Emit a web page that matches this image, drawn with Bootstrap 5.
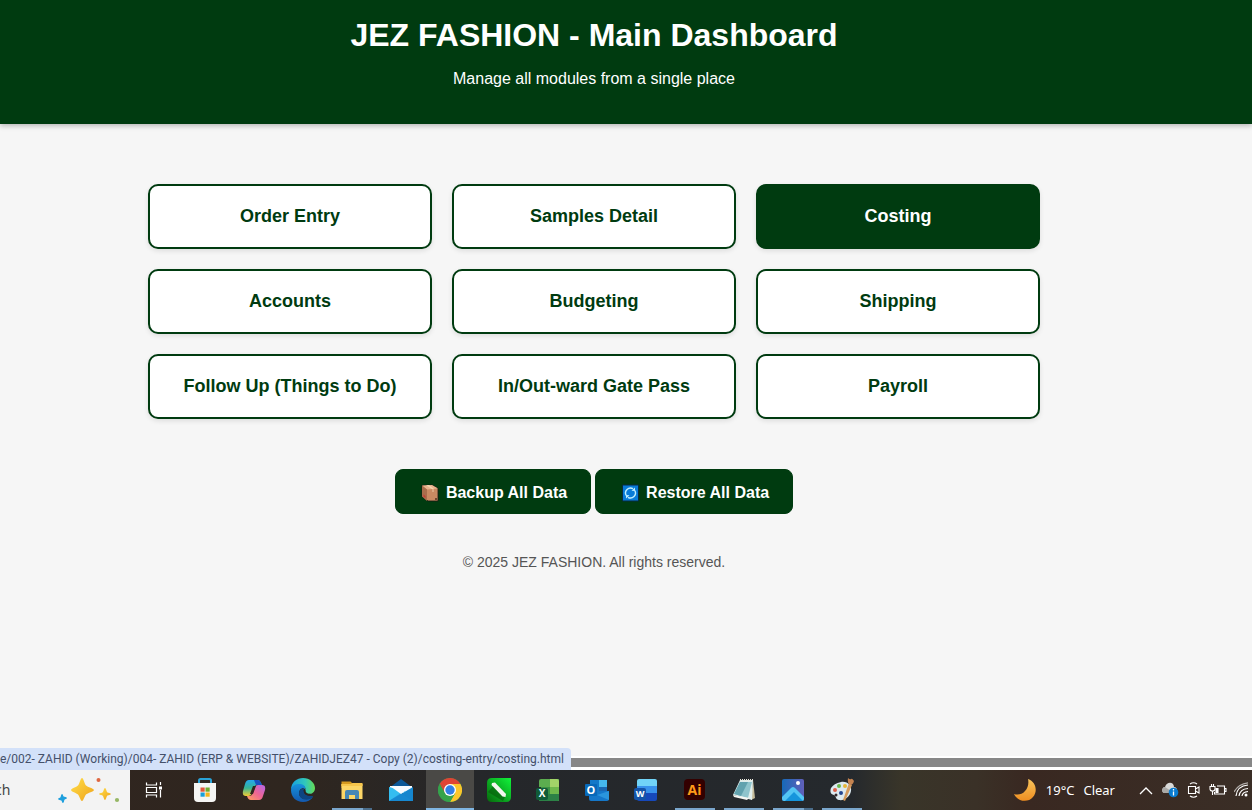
<!DOCTYPE html>
<html lang="en">
<head>
<meta charset="utf-8">
<meta name="viewport" content="width=device-width, initial-scale=1">
<title>JEZ FASHION - Main Dashboard</title>
<link href="https://cdn.jsdelivr.net/npm/bootstrap@5.3.0/dist/css/bootstrap.min.css" rel="stylesheet">
<style>
  :root { --brand: #003b10; }
  body { font-family: "Liberation Sans", Arial, sans-serif; background: #fff; color: #333; overflow: hidden; }
  .page-view { background: #f6f6f6; }
  .page-head { background: var(--brand); color: #fff; height: 124px; padding: 16px 64px 0 0; box-shadow: 0 2px 5px rgba(0,0,0,.25); }
  .page-head h1 { font-size: 32px; line-height: 38px; font-weight: 700; margin-bottom: 15px; }
  .page-head p { font-size: 16px; line-height: 20px; }
  .page-main { padding: 60px 64px 0 0; }
  .module-grid { display: grid; grid-template-columns: repeat(3, 1fr); gap: 20px; max-width: 892px; margin: 0 auto 50px; }
  .module-btn { --bs-btn-color: var(--brand); --bs-btn-bg: #fff; --bs-btn-border-color: var(--brand);
    --bs-btn-hover-bg: var(--brand); --bs-btn-hover-color: #fff; --bs-btn-hover-border-color: var(--brand);
    --bs-btn-active-bg: var(--brand); --bs-btn-active-color: #fff; --bs-btn-active-border-color: var(--brand);
    height: 65px; padding: 4px 12px 6px; border-width: 2px; border-radius: 10px; font-size: 18px; font-weight: 700; line-height: 24px;
    display: flex; align-items: center; justify-content: center; box-shadow: 0 2px 5px rgba(0,0,0,.1); }
  .data-btn { --bs-btn-color: #fff; --bs-btn-bg: var(--brand); --bs-btn-border-color: var(--brand);
    --bs-btn-hover-bg: #00511a; --bs-btn-hover-color: #fff; height: 45px; padding: 2px 23px 0 25px; border-radius: 8px;
    font-size: 16px; font-weight: 700; display: flex; align-items: center; gap: 6px; }
  .page-foot { font-size: 14px; line-height: 20px; color: #555; margin-top: 38px; }
  .link-status { left: 0; bottom: -3px; height: 22px; background: #d3e1f9; color: #44506a; border-radius: 0 4px 0 0;
    font-family: Roboto, "Noto Sans", sans-serif; font-size: 12px; line-height: 23px; padding-right: 7px; white-space: nowrap; }
  .frame-edge { height: 14px; background: #878787; border-top: 2px solid #fff; border-bottom: 3px solid #fff; }
  .taskbar { height: 40px; margin-bottom: 2px; color: #fff; gap: 1px; overflow: hidden;
    background: linear-gradient(90deg, #30251f 0, #2f261f 24%, #25272a 38%, #25292d 68%, #393529 72%, #3a3127 78%, #392821 82%, #3a2e26 100%); }
  .search-box { width: 130px; background: #f3f3f3; }
  .search-box input { width: 56px; border: 0; background: none; padding: 0; font: 14px/20px "Noto Sans", sans-serif; color: #444; text-indent: -34px; }
  .task-item { width: 48px; height: 40px; border: 0; padding: 0; background: none; color: #fff; display: flex; align-items: center; justify-content: center; flex: none; }
  .task-view { width: 46px; margin-right: 3px; }
  .is-open { background: linear-gradient(#7aa6cc, #7aa6cc) center bottom / 40px 2px no-repeat; }
  .is-many { background: linear-gradient(90deg, #7aa6cc 31px, #4b6d8b 31px) center bottom / 40px 2px no-repeat; }
  .is-active { background: #4a4946; box-shadow: inset 0 -2px #80b6e2; }
  .weather { font: 13px/20px "Noto Sans", sans-serif; border: 0; background: none; color: #fff; padding: 0; gap: 9px; margin-right: 19px; }
  .tray-group { margin-right: -2px; }
  .tray-item { width: 24px; height: 40px; border: 0; padding: 0; background: none; color: #fff; display: flex; align-items: center; justify-content: center; flex: none; }
  .icon-word { font-family: "Open Sans", sans-serif; font-weight: 700; }
</style>
</head>
<body>
<div class="min-vh-100 d-flex flex-column">
  <div class="page-view flex-grow-1">
    <header class="page-head text-center position-relative">
      <h1>JEZ FASHION - Main Dashboard</h1>
      <p class="mb-0">Manage all modules from a single place</p>
    </header>
    <main class="page-main text-center">
      <nav class="module-grid" aria-label="Modules">
        <a class="btn module-btn" href="#order">Order Entry</a>
        <a class="btn module-btn" href="#samples">Samples Detail</a>
        <a class="btn module-btn active" href="#costing">Costing</a>
        <a class="btn module-btn" href="#accounts">Accounts</a>
        <a class="btn module-btn" href="#budgeting">Budgeting</a>
        <a class="btn module-btn" href="#shipping">Shipping</a>
        <a class="btn module-btn" href="#followup">Follow Up (Things to Do)</a>
        <a class="btn module-btn" href="#gatepass">In/Out-ward Gate Pass</a>
        <a class="btn module-btn" href="#payroll">Payroll</a>
      </nav>
      <div class="d-flex justify-content-center gap-1">
        <button type="button" class="btn data-btn">
          <svg width="19" height="18" viewBox="0 0 19 18" aria-hidden="true"><path d="M1 1.500 11 1l6 3.500V17H7L1 12.500z" fill="#c98a62" stroke="#1b1712" stroke-width=".8"/><path d="M1 1.500 11 1l6 3.500-11 1z" fill="#e7b58e"/><path d="M1 1.500 6 5.500V17l-5-4.500z" fill="#a96d4b"/><path d="M5 1.300 11 5l2 0L8 1.100z" fill="#f3d3ae"/><path d="M11 5h2v3h-2z" fill="#dba982"/><path d="M2.500 10.500 4.500 12v2l-2-1.500z" fill="#c33c35"/><path d="M14 14h2v2h-2z" fill="#70452f"/></svg>
          Backup All Data</button>
        <button type="button" class="btn data-btn">
          <svg width="19" height="18" viewBox="0 0 19 18" aria-hidden="true"><path d="M1.500 1h16v16h-16z" fill="#087bd8" stroke="#062b42"/><g fill="none" stroke="#bfefff" stroke-width="1.400"><path d="M5.200 11.500A5 5 0 0 1 12 4.700M13.800 6.500A5 5 0 0 1 7 13.300"/></g><path d="m10.500 6.800 3.500.2V3.500zM8.500 11.200 5 11v3.500z" fill="#bfefff"/></svg>
          Restore All Data</button>
      </div>
      <footer class="page-foot">© 2025 JEZ FASHION. All rights reserved.</footer>
    </main>
  </div>

  <div class="frame-edge position-relative"><div class="link-status position-absolute z-1">e/002- ZAHID (Working)/004- ZAHID (ERP &amp; WEBSITE)/ZAHIDJEZ47 - Copy (2)/costing-entry/costing.html</div></div>

  <div class="taskbar d-flex align-items-center">
    <label class="search-box d-flex align-items-center h-100 flex-shrink-0">
      <input type="text" value="Search" aria-label="Search">
      <svg width="66" height="32" viewBox="0 0 66 32" aria-hidden="true"><defs><linearGradient id="gold" x1="0" y1="0" x2="1" y2="1"><stop offset="0" stop-color="#ffdf4a"/><stop offset="1" stop-color="#efa21a"/></linearGradient></defs><path d="M26 4c1.500 0 2.500 6 4 7.500S38 14.500 38 16s-6.500 3-8 4.500S27.500 27 26 27s-2.500-5-4-6.500-7-3-7-4.500 5.500-3 7-4.500S24.500 4 26 4z" fill="url(#gold)"/><path d="M49 14c1 0 1.500 3.500 2.200 4.200S55 19 55 20s-3 1-3.800 1.800S50 26 49 26s-1.500-3.500-2.200-4.200S43 21 43 20s3-1 3.800-1.800S48 14 49 14z" fill="url(#gold)"/><path d="M6 20c1 0 1 2 1.700 2.500S11 23 11 24s-2 1-2.500 1.800S8 29 7 29s-1-2-1.700-2.500S2 26 2 25s2-1 2.500-1.800S5 20 6 20z" fill="#1e9fdd"/><circle cx="42.500" cy="6" r="2" fill="#df6842"/><circle cx="61" cy="26" r="2.100" fill="#96b765"/></svg>
    </label>
    <button class="task-item task-view" aria-label="Task view"><svg width="18" height="18" viewBox="0 0 18 18" fill="none" stroke="#fff" stroke-width="1.200"><path d="M1.500 1.500v2.500h10V1.500M1.500 16.500V14h10v2.500M1.500 6.500h10v5h-10zM15.500 1v3M15.500 9v7.500"/><path d="M14 5.500h3v3h-3z" fill="#fff" stroke="none"/></svg></button>

    <button class="task-item" aria-label="Store"><svg width="24" height="24" viewBox="0 0 24 24"><path d="M6 6V2.500Q6 1 7.500 1h9Q18 1 18 2.500V6" fill="none" stroke="#2aa3d8" stroke-width="2"/><path d="M1 5h22v15q0 4-4 4H5q-4 0-4-4z" fill="#f5f5f3"/><path d="M7.500 9.500h4.200v4.200H7.500z" fill="#e2573a"/><path d="M12.500 9.500h4.200v4.200h-4.200z" fill="#71ad2c"/><path d="M7.500 14.500h4.200v4.200H7.500z" fill="#1b9fda"/><path d="M12.500 14.500h4.200v4.200h-4.200z" fill="#f5b51c"/></svg></button>

    <button class="task-item" aria-label="Copilot"><svg width="24" height="24" viewBox="0 0 24 24"><defs><linearGradient id="cpA" x1="0" y1="0" x2="0" y2="1"><stop offset="0" stop-color="#25a7ee"/><stop offset=".5" stop-color="#36b595"/><stop offset="1" stop-color="#f3cb32"/></linearGradient><linearGradient id="cpB" x1="1" y1="0" x2="0" y2="1"><stop offset="0" stop-color="#b567ea"/><stop offset=".5" stop-color="#ee6594"/><stop offset="1" stop-color="#ffa15c"/></linearGradient></defs><path d="M7 2h9q2 0 3 3l1 2h-5q-2 0-3 2l-2 6q-1 3-4 3H4q-4 0-3-5L3 6q1-4 4-4z" fill="url(#cpA)"/><path d="M12 2h4q2 0 3 3l1 2h-6z" fill="#1752c0"/><path d="M17 22H9q-3 0-4-4h3q2 0 3-3l2-6q1-2 3-2h4q4 0 3 5l-2 6q-1 4-4 4z" fill="url(#cpB)"/><path d="M11 8h3l-3 8H8z" fill="#30251f"/></svg></button>

    <button class="task-item" aria-label="Edge"><svg width="24" height="24" viewBox="0 0 24 24"><defs><linearGradient id="edA" x1="0" y1="0" x2="1" y2="0"><stop offset="0" stop-color="#179fdf"/><stop offset=".6" stop-color="#31c8ba"/><stop offset="1" stop-color="#66dc54"/></linearGradient><linearGradient id="edB" x1="0" y1="0" x2="0" y2="1"><stop offset="0" stop-color="#1691dc"/><stop offset="1" stop-color="#1358ad"/></linearGradient></defs><path d="M0 12C0 4 6 0 12 0c7 0 12 5 12 10 0 4-3 6-6 6-3 0-5-1-4-3 2-4-2-6-6-6-4 0-7 2-8 5z" fill="url(#edA)"/><path d="M0 12c1-5 5-6 8-6 4 0 7 2 6 5-3-2-6 1-6 4 0 6 7 8 14 4-2 3-6 5-10 5C5 24 0 19 0 12z" fill="url(#edB)"/><path d="M8 15c0-3 3-5 5-4-1 5 2 7 9 7 0 1-1 2-3 3-6 2-11-1-11-6z" fill="#0d4582"/><path d="M13.500 12c0 4 3 5 6 4.500" fill="none" stroke="#2b2621" stroke-width="2"/></svg></button>

    <button class="task-item is-many" aria-label="File Explorer"><svg width="24" height="24" viewBox="0 0 24 24"><path d="M1.500 3.500h9l2 2h9V10h-20z" fill="#d69a20"/><path d="M1.500 6h21v15h-21z" fill="#fcd667"/><path d="M1.500 6h9l2-1h10v3h-21z" fill="#f7c64c"/><path d="M5 21v-7q0-2 2-2h10q2 0 2 2v7h-4v-4H9v4z" fill="#4687b6"/></svg></button>

    <button class="task-item" aria-label="Mail"><svg width="24" height="24" viewBox="0 0 24 24"><path d="M0 10 12 1l12 9-12 5z" fill="#0b5797"/><path d="M1 8h22v7H1z" fill="#f7fbff"/><path d="m0 9 12 7 12-7v14H0z" fill="#1686ce"/><path d="M0 9v14L17 13z" fill="#34bdf0"/><path d="m12 15 12 8H0z" fill="#198bd3" opacity=".65"/><path d="M1 8h22L12 16z" fill="#f7fbff"/></svg></button>

    <button class="task-item is-active" aria-label="Chrome"><svg width="24" height="24" viewBox="0 0 24 24"><circle cx="12" cy="12" r="12" fill="#35a34c"/><path d="M12 12 1.600 6A12 12 0 0 1 22.400 6z" fill="#e04334"/><path d="M12 6h10.400A12 12 0 0 1 12 24l5.200-9z" fill="#fbc62b"/><path d="M1.600 6 8 17l4-5z" fill="#e04334"/><path d="M1.600 6A12 12 0 0 0 12 24l5.200-9H7z" fill="#35a34c"/><circle cx="12" cy="12" r="6" fill="#fff"/><circle cx="12" cy="12" r="4.700" fill="#327fe5"/></svg></button>

    <button class="task-item" aria-label="CorelDRAW"><svg width="24" height="24" viewBox="0 0 24 24"><defs><linearGradient id="cdr" x1="0" y1="1" x2="1" y2="0"><stop offset="0" stop-color="#07680c"/><stop offset="1" stop-color="#10f43a"/></linearGradient></defs><path d="M5 0h19v19q0 5-5 5H5q-5 0-5-5V5q0-5 5-5z" fill="url(#cdr)"/><path d="m7 7 11 12-2 4L1 14z" fill="#075309" opacity=".55"/><path d="m5 5 3-.5L19 16l-.5 3-3-.5L4.500 7z" fill="#f3f6ee"/></svg></button>

    <button class="task-item" aria-label="Excel"><svg width="24" height="24" viewBox="0 0 24 24"><path d="M5 1h18v22H5z" fill="#3b9144"/><path d="M5 1h9v8H3V3q0-2 2-2z" fill="#5cad4f"/><path d="M14 1h7q2 0 2 2v6h-9z" fill="#a3d468"/><path d="M14 9h9v7h-9z" fill="#6fb94c"/><path d="M3 16h20v5q0 2-2 2H3z" fill="#2c8146"/><rect y="10" width="12" height="12" rx="2" fill="#115b38"/><text x="6" y="19" text-anchor="middle" font-size="10" fill="#fff" class="icon-word">X</text></svg></button>

    <button class="task-item" aria-label="Outlook"><svg width="24" height="24" viewBox="0 0 24 24"><path d="M5 2h17v13H5z" fill="#1478c8"/><path d="M14 2h8v7h-8z" fill="#45b8ee"/><path d="M14 9h8v6h-8z" fill="#1b67b2"/><path d="M4 13h20v8q0 2-2 2H6q-2 0-2-2z" fill="#1577c9"/><path d="M24 13v9L12 17z" fill="#2a95dc"/><rect y="6" width="12" height="12" rx="1" fill="#0869b9"/><text x="6" y="16" text-anchor="middle" font-size="11" fill="#fff" class="icon-word">O</text></svg></button>

    <button class="task-item" aria-label="Word"><svg width="24" height="24" viewBox="0 0 24 24"><path d="M5 1h16q2 0 2 2v6H3V3q0-2 2-2z" fill="#71d4f8"/><path d="M3 8h20v8H3z" fill="#3892ec"/><path d="M3 15h20v6q0 2-2 2H5q-2 0-2-2z" fill="#1648ba"/><rect y="10" width="12" height="12" rx="2" fill="#1554a8"/><text x="6" y="19" text-anchor="middle" font-size="9" fill="#fff" class="icon-word">W</text></svg></button>

    <button class="task-item is-open" aria-label="Illustrator"><svg width="24" height="24" viewBox="0 0 24 24"><rect x="1" y="1" width="21" height="21" rx="4" fill="#330000"/><text x="11.500" y="17" text-anchor="middle" font-size="14" fill="#ff9a18" class="icon-word">Ai</text></svg></button>

    <button class="task-item is-open" aria-label="Notepad"><svg width="24" height="24" viewBox="0 0 24 24"><path d="M21 2 23 20l-4 2z" fill="#c5bb9a"/><path d="M8 2h13l-1 20L1 17z" fill="#e0edec"/><path d="M8 4h12l-4 16L2 16z" fill="#8fc4cc"/><path d="m16 4-7 14-7-2L8 4z" fill="#62a2ae"/><path d="M8 2h13" stroke="#e9e9df" stroke-width="2" stroke-dasharray="1 1"/><path d="m1 17 16 3-2 2-13-3z" fill="#f5f6f2"/></svg></button>

    <button class="task-item is-many" aria-label="Photos"><svg width="24" height="24" viewBox="0 0 24 24"><defs><linearGradient id="pho" x1="0" y1="0" x2="1" y2="0"><stop offset="0" stop-color="#1669b7"/><stop offset="1" stop-color="#6160ba"/></linearGradient></defs><rect x="1" y="1" width="22" height="22" rx="2" fill="url(#pho)"/><path d="m1 19 9-9q2-2 4 0l9 9v2q0 2-2 2H3q-2 0-2-2z" fill="#53c5f4"/><path d="m4 23 9-9 9 9z" fill="#1695dc"/><circle cx="17" cy="5" r="2" fill="#fff"/></svg></button>

    <button class="task-item is-open" aria-label="Paint"><svg width="24" height="24" viewBox="0 0 24 24"><path d="M11 4c7-1 11 4 10 9-1 6-7 10-12 9-3 0-3-4-5-5-4-1-4-4-3-7 2-3 5-5 10-6z" fill="#dde9ef"/><circle cx="5" cy="12" r="2" fill="#de6048"/><circle cx="9" cy="8" r="2" fill="#69b74c"/><circle cx="15" cy="8" r="2" fill="#e8b536"/><circle cx="6" cy="17" r="1.500" fill="#34292b"/><circle cx="11" cy="15" r="2" fill="#244590"/><path d="m19 5 3 2-7 16-2-1z" fill="#d49a5d"/><path d="M18 0q2 2 3 1t3 2q-1 4-4 4-3-2-2-7z" fill="#c58350"/></svg></button>

    <div class="tray-group ms-auto d-flex align-items-center flex-shrink-0">
      <button class="weather d-flex align-items-center"><svg width="24" height="24" viewBox="0 0 24 24" aria-hidden="true"><defs><linearGradient id="moon" x1="0" y1="0" x2="0" y2="1"><stop offset="0" stop-color="#f8c45c"/><stop offset="1" stop-color="#ee8d20"/></linearGradient></defs><path d="M15 1c8 3 10 12 5 18-5 6-15 5-19-3 3 1 8 1 11-3 3-3 4-8 3-12z" fill="url(#moon)"/></svg><span>19°C</span><span>Clear</span></button>
      <button class="tray-item" aria-label="Show hidden icons"><svg width="14" height="9" viewBox="0 0 14 9"><path d="m1 8 6-6 6 6" fill="none" stroke="#fff" stroke-width="1.300"/></svg></button>
      <button class="tray-item" aria-label="OneDrive"><svg width="18" height="16" viewBox="0 0 18 16"><path d="M3 11C0 10 1 5 4 5c2-6 9-5 9 0 4 0 4 6 0 6z" fill="#d9d9d8"/><path d="M3 11C0 10 1 5 4 5l9 6z" fill="#aaa9a7"/><circle cx="12.500" cy="10.500" r="4.800" fill="#087bd0"/><path d="M12.500 7v1.400M12.500 9.500v4" stroke="#fff" stroke-width="1.300"/></svg></button>
      <button class="tray-item" aria-label="Meet now"><svg width="14" height="18" viewBox="0 0 14 18" fill="none" stroke="#fff" stroke-width="1.100"><path d="M3 3q3.500-2.500 7 0M3 15q3.500 2.500 7 0M1.500 5.500h7v7h-7zM8.500 8l3.500-2v6l-3.500-2"/></svg></button>
      <button class="tray-item" aria-label="Battery"><svg width="18" height="14" viewBox="0 0 18 14" fill="none" stroke="#fff" stroke-width="1.100"><path d="M8 3h7.500v8H5.500V9M15.500 5.500H17v3h-1.500M1 3.500h5v2.500q0 2-2.500 2T1 6zM2.500 1v2.500M4.500 1v2.500M3.500 8v4"/><path d="M7 5.500h2v4H7z" fill="#fff"/></svg></button>
      <button class="tray-item" aria-label="Network"><svg width="16" height="16" viewBox="0 0 16 16" fill="none" stroke="#fff" stroke-width="1.200"><path d="M2 14Q3 4 14 3"/><path d="M5 14q1-7 9-7.500M8 14q.5-4 6-4.500" /><path d="M0 10Q4 2 14 .8" opacity=".6"/><circle cx="12" cy="13" r="1.500" fill="#fff" stroke="none"/></svg></button>
    </div>
  </div>
</div>
<script src="https://cdn.jsdelivr.net/npm/bootstrap@5.3.0/dist/js/bootstrap.bundle.min.js"></script>
</body>
</html>
